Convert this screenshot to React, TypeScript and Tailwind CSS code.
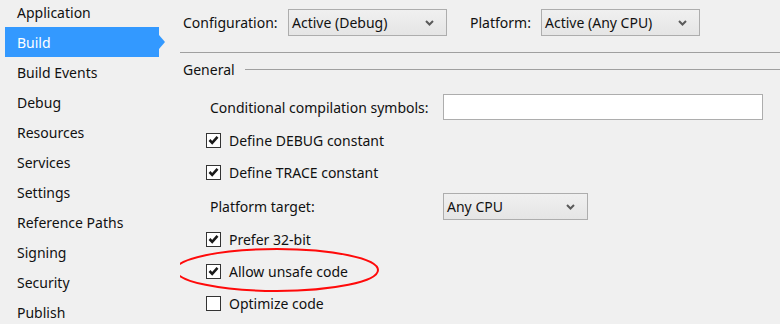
import React from "react";

const navItems = [
  "Application",
  "Build",
  "Build Events",
  "Debug",
  "Resources",
  "Services",
  "Settings",
  "Reference Paths",
  "Signing",
  "Security",
  "Publish",
];

function Chevron() {
  return (
    <svg width="9" height="6" viewBox="0 0 9 6" className="shrink-0">
      <path d="M1 1 L4.5 4.5 L8 1" fill="none" stroke="#5a5a5a" strokeWidth="2" />
    </svg>
  );
}

function Combo({ value, width }: { value: string; width: string }) {
  return (
    <div
      className={`${width} h-[27px] flex items-center justify-between pl-[3px] pr-[12px] border border-[#adadad] bg-gradient-to-b from-[#f0f0f0] to-[#e5e5e5]`}
    >
      <span>{value}</span>
      <Chevron />
    </div>
  );
}

function CheckRow({ label, checked }: { label: string; checked: boolean }) {
  return (
    <div className="h-[32px] flex items-center pl-[26px]">
      <div className="w-[15px] h-[15px] border border-[#333333] bg-white flex items-center justify-center">
        {checked && (
          <svg width="11" height="10" viewBox="0 0 11 10">
            <path d="M1.5 5 L4.2 7.8 L9.5 1.8" fill="none" stroke="#1a1a1a" strokeWidth="2.6" />
          </svg>
        )}
      </div>
      <span className="ml-[8px]">{label}</span>
    </div>
  );
}

export default function App() {
  return (
    <div
      className="w-[780px] h-[324px] overflow-hidden bg-[#f0f0f0] text-[#111111] text-[14px] flex"
      style={{ fontFamily: '"Noto Sans", "Open Sans", sans-serif' }}
    >
      {/* Sidebar */}
      <div className="w-[180px] shrink-0">
        <div className="-mt-[3px]">
          {navItems.map((item) =>
            item === "Build" ? (
              <div key={item} className="relative ml-[5px] w-[154px] h-[30px] flex items-center pl-[12px] bg-[#3399ff] text-white">
                {item}
                <div className="absolute -right-[6px] top-[8px] w-0 h-0 border-y-[7px] border-y-transparent border-l-[6px] border-l-[#3399ff]" />
              </div>
            ) : (
              <div key={item} className="h-[30px] flex items-center pl-[17px]">
                {item}
              </div>
            )
          )}
        </div>
      </div>

      {/* Main */}
      <div className="relative flex-1">
        <div className="h-[53px] border-b border-[#a0a0a0] flex items-start pt-[9px] pl-[3px]">
          <div className="h-[27px] flex items-center w-[105px]">Configuration:</div>
          <Combo value="Active (Debug)" width="w-[159px]" />
          <div className="h-[27px] flex items-center ml-[23px] w-[71px]">Platform:</div>
          <Combo value="Active (Any CPU)" width="w-[159px]" />
        </div>

        <div className="h-[32px] flex items-center pl-[3px]">
          <span>General</span>
          <div className="flex-1 h-px bg-[#a0a0a0] ml-[10px]" />
        </div>

        <div className="mt-[9px] flex items-center pl-[30px]">
          <div className="w-[233px]">Conditional compilation symbols:</div>
          <div className="w-[320px] h-[26px] bg-white border border-[#adadad]" />
        </div>

        <div className="mt-[4px]">
          <CheckRow label="Define DEBUG constant" checked />
          <CheckRow label="Define TRACE constant" checked />
        </div>

        <div className="mt-[5px] flex items-center pl-[30px]">
          <div className="w-[233px]">Platform target:</div>
          <Combo value="Any CPU" width="w-[145px]" />
        </div>

        <div className="mt-[3px]">
          <CheckRow label="Prefer 32-bit" checked />
          <CheckRow label="Allow unsafe code" checked />
          <CheckRow label="Optimize code" checked={false} />
        </div>

        {/* red annotation */}
        <svg className="absolute left-0 top-0 pointer-events-none" width="600" height="324">
          <ellipse cx="97" cy="270" rx="101" ry="21" fill="none" stroke="#ff0a0a" strokeWidth="2" />
        </svg>
      </div>
    </div>
  );
}
